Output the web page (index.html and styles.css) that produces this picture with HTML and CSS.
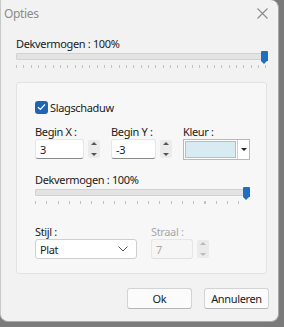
FILE: index.html
```html
<!DOCTYPE html>
<html>
<head>
    <meta charset="utf-8">
    <link rel="stylesheet" href="styles.css">
</head>
<body>
    <div class="dialog">
        <div class="titlebar">
            <span class="title">Opties</span>
            <svg class="close" width="11" height="11" viewBox="0 0 11 11">
                <path d="M0.5 0.5 L10.5 10.5 M10.5 0.5 L0.5 10.5" stroke="#8a8a8a" stroke-width="1.1" fill="none"/>
            </svg>
        </div>

        <div class="content">
            <div class="field-label">Dekvermogen : 100%</div>
            <div class="slider wide">
                <div class="track"></div>
                <div class="thumb"></div>
            </div>
            <div class="ticks ticks-wide"></div>

            <div class="group">
                <label class="check-row">
                    <span class="checkbox">
                        <svg width="9" height="8" viewBox="0 0 9 8">
                            <path d="M1 4.2 L3.4 6.4 L8 1.4" stroke="#fff" stroke-width="1.3" fill="none"/>
                        </svg>
                    </span>
                    Slagschaduw
                </label>

                <div class="row">
                    <div class="col">
                        <div class="field-label">Begin X :</div>
                        <div class="spin spin-x">
                            <div class="spin-input">3</div>
                            <div class="spin-btns">
                                <span class="arrow up"></span>
                                <span class="arrow down"></span>
                            </div>
                        </div>
                    </div>
                    <div class="col">
                        <div class="field-label">Begin Y :</div>
                        <div class="spin spin-y">
                            <div class="spin-input">-3</div>
                            <div class="spin-btns">
                                <span class="arrow up"></span>
                                <span class="arrow down"></span>
                            </div>
                        </div>
                    </div>
                    <div class="col">
                        <div class="field-label">Kleur :</div>
                        <div class="color-combo">
                            <div class="swatch"></div>
                            <div class="combo-btn"><span class="arrow down dark"></span></div>
                        </div>
                    </div>
                </div>

                <div class="field-label opacity-label">Dekvermogen : 100%</div>
                <div class="slider narrow">
                    <div class="track"></div>
                    <div class="thumb"></div>
                </div>
                <div class="ticks ticks-narrow"></div>

                <div class="row style-row">
                    <div class="col">
                        <div class="field-label">Stijl :</div>
                        <div class="select">
                            <span>Plat</span>
                            <svg width="10" height="6" viewBox="0 0 10 6">
                                <path d="M0.5 0.5 L5 5 L9.5 0.5" stroke="#555" stroke-width="1" fill="none"/>
                            </svg>
                        </div>
                    </div>
                    <div class="col">
                        <div class="field-label disabled">Straal :</div>
                        <div class="spin spin-r disabled">
                            <div class="spin-input">7</div>
                            <div class="spin-btns">
                                <span class="arrow up"></span>
                                <span class="arrow down"></span>
                            </div>
                        </div>
                    </div>
                </div>
            </div>

            <div class="buttons">
                <button class="btn">Ok</button>
                <button class="btn">Annuleren</button>
            </div>
        </div>
    </div>
</body>
</html>
```

FILE: styles.css
```css
body {
    margin: 0;
    width: 284px;
    height: 327px;
    background: #7a7a7a;
    font-family: "Noto Sans", "Open Sans", sans-serif;
    font-size: 11px;
    letter-spacing: -0.35px;
    color: #1a1a1a;
    overflow: hidden;
}

.dialog {
    width: 279px;
    height: 322px;
    background: #f2f2f2;
    border: 1px solid #a8a8a8;
    border-top: none;
    border-left-color: #c8c8c8;
    border-radius: 0 8px 8px 8px;
    box-sizing: border-box;
}

.titlebar {
    height: 26px;
    display: flex;
    align-items: center;
    justify-content: space-between;
    padding: 0 10px 0 3px;
}

.title {
    color: #8c8c8c;
    font-size: 12px;
}

.content {
    padding: 10px 11px 0 15px;
}

.field-label {
    line-height: 15px;
    height: 15px;
}

.field-label.disabled {
    color: #a8a8a8;
}

.slider {
    position: relative;
    height: 13px;
}

.track {
    position: absolute;
    left: 0;
    right: 0;
    top: 2px;
    height: 5px;
    background: #e3e3e3;
    border: 1px solid #d2d2d2;
    border-radius: 1px;
}

.thumb {
    position: absolute;
    right: -1px;
    top: 0;
    width: 7px;
    height: 10px;
    background: #1f6fc0;
    border-radius: 1px 1px 0 0;
}

.thumb::after {
    content: '';
    position: absolute;
    left: 0;
    top: 10px;
    border-left: 3.5px solid transparent;
    border-right: 3.5px solid transparent;
    border-top: 3px solid #1f6fc0;
}

.ticks {
    height: 3px;
    margin-top: 1px;
    background-image: repeating-linear-gradient(90deg, #c2c2c2 0, #c2c2c2 1px, transparent 1px, transparent 7.33px);
}

.ticks-wide {
    width: 251px;
}

.ticks-narrow {
    width: 215px;
    background-image: repeating-linear-gradient(90deg, #c2c2c2 0, #c2c2c2 1px, transparent 1px, transparent 11.3px);
}

.group {
    margin-top: 14px;
    width: 251px;
    height: 192px;
    box-sizing: border-box;
    border: 1px solid #e2e2e2;
    border-radius: 3px;
    background: #f7f7f7;
    padding: 17px 18px 0 18px;
}

.check-row {
    display: flex;
    align-items: center;
    gap: 2px;
    height: 14px;
}

.checkbox {
    width: 13px;
    height: 13px;
    border-radius: 3px;
    background: #1f63b5;
    display: flex;
    align-items: center;
    justify-content: center;
}

.row {
    display: flex;
    margin-top: 10px;
}

.col {
    display: flex;
    flex-direction: column;
}

.spin {
    display: flex;
    align-items: center;
    height: 20px;
}

.spin-x {
    width: 65px;
    margin-right: 11px;
}

.spin-y {
    width: 61px;
    margin-right: 11px;
}

.spin-r {
    width: 58px;
}

.spin-input {
    flex: 1;
    height: 20px;
    box-sizing: border-box;
    background: #fff;
    border: 1px solid #e6e6e6;
    border-bottom: 1px solid #8a8a8a;
    border-radius: 3px;
    padding: 2px 0 0 4px;
    line-height: 15px;
}

.spin.disabled .spin-input {
    background: #f6f6f6;
    border-bottom-color: #e0e0e0;
    color: #a8a8a8;
}

.spin-btns {
    width: 12px;
    height: 18px;
    margin-left: 4px;
    display: flex;
    flex-direction: column;
    justify-content: space-between;
    align-items: center;
    padding: 2px 0;
    box-sizing: border-box;
    background: #ebebeb;
    border-radius: 2px;
}

.arrow {
    width: 0;
    height: 0;
    border-left: 3px solid transparent;
    border-right: 3px solid transparent;
}

.arrow.up {
    border-bottom: 3px solid #555;
}

.arrow.down {
    border-top: 3px solid #555;
}

.spin.disabled .arrow.up {
    border-bottom-color: #bbb;
}

.spin.disabled .arrow.down {
    border-top-color: #bbb;
}

.color-combo {
    display: flex;
    width: 67px;
    height: 21px;
    box-sizing: border-box;
    border: 1px solid #b9b9b9;
    background: #fff;
}

.swatch {
    width: 49px;
    margin: 1px;
    background: #d8ebf3;
    border: 1px solid #a9c3cf;
}

.combo-btn {
    flex: 1;
    display: flex;
    align-items: center;
    justify-content: center;
    border-left: 1px solid #cfcfcf;
}

.arrow.dark {
    border-top-color: #222;
}

.opacity-label {
    margin-top: 12px;
}

.narrow {
    width: 214px;
}

.style-row {
    margin-top: 20px;
}

.select {
    width: 102px;
    height: 20px;
    box-sizing: border-box;
    background: #fff;
    border: 1px solid #cfcfcf;
    border-radius: 3px;
    display: flex;
    align-items: center;
    justify-content: space-between;
    padding: 0 8px 0 4px;
    margin-right: 14px;
}

.buttons {
    display: flex;
    justify-content: flex-end;
    gap: 12px;
    margin-top: 14px;
    width: 253px;
}

.btn {
    height: 21px;
    width: 65px;
    background: #fbfbfb;
    border: 1px solid #d3d3d3;
    border-bottom-color: #b5b5b5;
    border-radius: 3px;
    font-family: "Noto Sans", "Open Sans", sans-serif;
    font-size: 11px;
    letter-spacing: -0.35px;
    color: #1a1a1a;
    padding: 0;
}
```
